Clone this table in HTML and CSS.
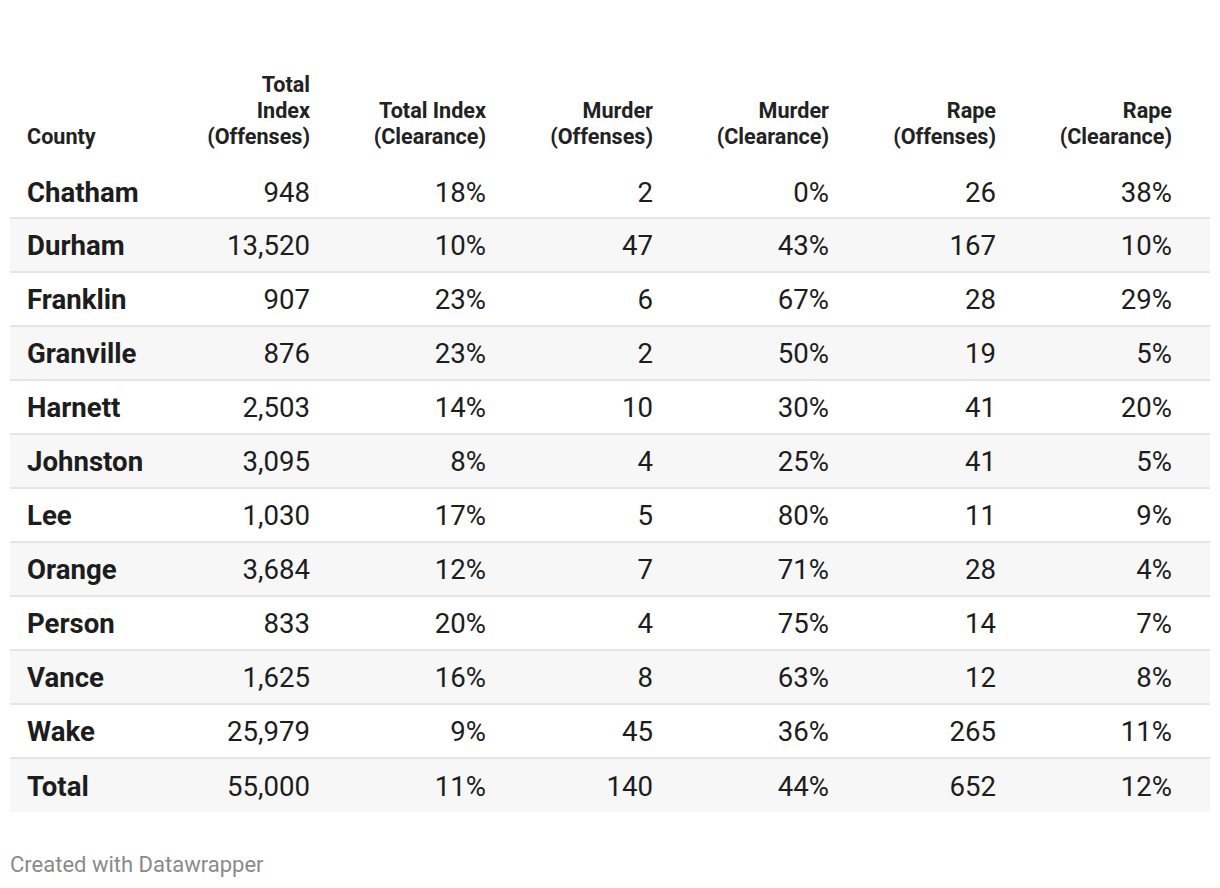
FILE: index.html
```html
<!DOCTYPE html>
<html lang="en">
<head>
<meta charset="utf-8">
<title>County crime table</title>
<link rel="stylesheet" href="styles.css">
</head>
<body>
<div class="chart">
  <table class="data">
    <colgroup>
      <col class="c0"><col class="c1"><col class="c2"><col class="c3"><col class="c4"><col class="c5"><col class="c6">
    </colgroup>
    <thead>
      <tr>
        <th class="name">County</th>
        <th>Total<br>Index<br>(Offenses)</th>
        <th>Total Index<br>(Clearance)</th>
        <th>Murder<br>(Offenses)</th>
        <th>Murder<br>(Clearance)</th>
        <th>Rape<br>(Offenses)</th>
        <th class="last">Rape<br>(Clearance)</th>
      </tr>
    </thead>
    <tbody>
      <tr><td class="name">Chatham</td><td>948</td><td>18%</td><td>2</td><td>0%</td><td>26</td><td class="last">38%</td></tr>
      <tr><td class="name">Durham</td><td>13,520</td><td>10%</td><td>47</td><td>43%</td><td>167</td><td class="last">10%</td></tr>
      <tr><td class="name">Franklin</td><td>907</td><td>23%</td><td>6</td><td>67%</td><td>28</td><td class="last">29%</td></tr>
      <tr><td class="name">Granville</td><td>876</td><td>23%</td><td>2</td><td>50%</td><td>19</td><td class="last">5%</td></tr>
      <tr><td class="name">Harnett</td><td>2,503</td><td>14%</td><td>10</td><td>30%</td><td>41</td><td class="last">20%</td></tr>
      <tr><td class="name">Johnston</td><td>3,095</td><td>8%</td><td>4</td><td>25%</td><td>41</td><td class="last">5%</td></tr>
      <tr><td class="name">Lee</td><td>1,030</td><td>17%</td><td>5</td><td>80%</td><td>11</td><td class="last">9%</td></tr>
      <tr><td class="name">Orange</td><td>3,684</td><td>12%</td><td>7</td><td>71%</td><td>28</td><td class="last">4%</td></tr>
      <tr><td class="name">Person</td><td>833</td><td>20%</td><td>4</td><td>75%</td><td>14</td><td class="last">7%</td></tr>
      <tr><td class="name">Vance</td><td>1,625</td><td>16%</td><td>8</td><td>63%</td><td>12</td><td class="last">8%</td></tr>
      <tr><td class="name">Wake</td><td>25,979</td><td>9%</td><td>45</td><td>36%</td><td>265</td><td class="last">11%</td></tr>
      <tr><td class="name">Total</td><td>55,000</td><td>11%</td><td>140</td><td>44%</td><td>652</td><td class="last">12%</td></tr>
    </tbody>
  </table>
  <div class="footer">Created with Datawrapper</div>
</div>
</body>
</html>
```
FILE: styles.css
```css
html, body {
  margin: 0;
  padding: 0;
  background: #ffffff;
}

body {
  font-family: Roboto, "Liberation Sans", sans-serif;
  color: #1d1d1d;
}

.chart {
  padding: 72px 10px 0 10px;
}

.data {
  width: 1200px;
  border-collapse: collapse;
  table-layout: fixed;
}

.c0 { width: 150px; }
.c1 { width: 150px; }
.c2 { width: 176px; }
.c3 { width: 167px; }
.c4 { width: 176px; }
.c5 { width: 167px; }
.c6 { width: 214px; }

.data th {
  font-size: 21.6px;
  line-height: 26px;
  font-weight: 700;
  color: #222222;
  text-align: right;
  vertical-align: bottom;
  padding: 0 0 16px 0;
  white-space: nowrap;
}

.data tbody tr {
  height: 52px;
}

.data tbody tr + tr {
  height: 54px;
}

.data td {
  font-size: 27.6px;
  line-height: 30px;
  padding: 2px 0 0 0;
  text-align: right;
  vertical-align: middle;
  white-space: nowrap;
  color: #1d1d1d;
}

.data th.name,
.data td.name {
  text-align: left;
  padding-left: 17px;
}

.data td.name {
  font-weight: 700;
}

.data th.last,
.data td.last {
  padding-right: 38px;
}

.data tbody tr + tr td {
  border-top: 2px solid #e5e5e5;
}

.data tbody tr:nth-child(even) td {
  background: #f7f7f7;
}

.footer {
  margin-top: 40px;
  font-size: 22px;
  line-height: 26px;
  color: #8a8a8a;
}
```
